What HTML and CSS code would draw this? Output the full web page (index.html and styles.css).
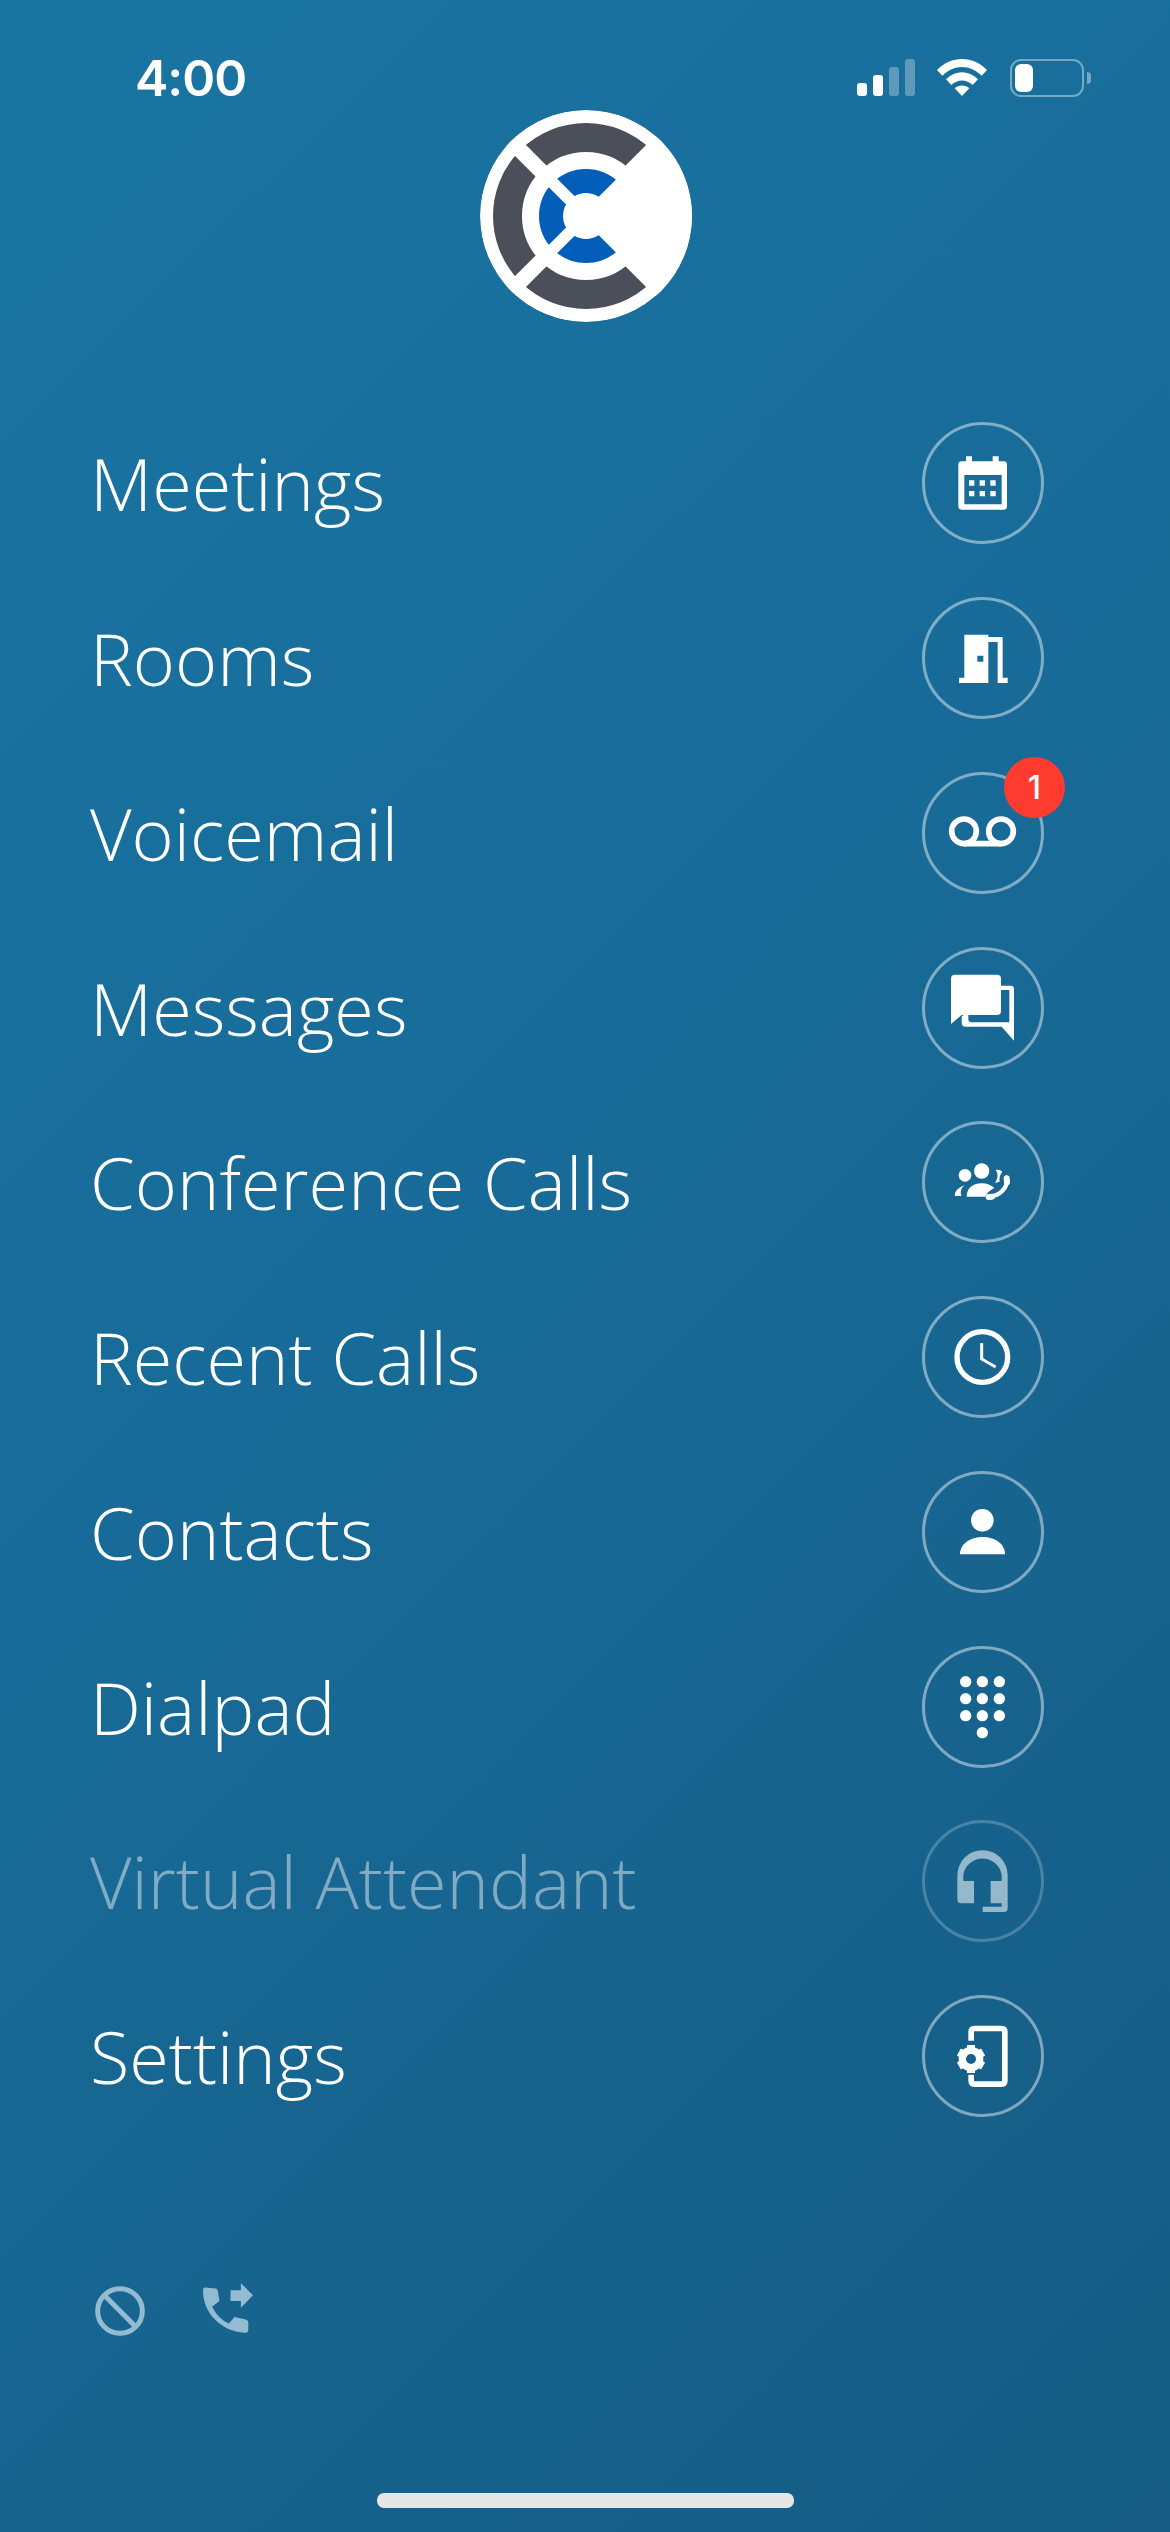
FILE: index.html
```html
<!DOCTYPE html>
<html lang="en">
<head>
<meta charset="utf-8">
<title>Menu</title>
<link rel="stylesheet" href="styles.css">
</head>
<body>
<div class="screen">
  <header class="status">
    <span class="time">4:00</span>
    <div class="status-icons">
      <div class="signal"><i class="bar b1"></i><i class="bar b2"></i><i class="bar b3 dim"></i><i class="bar b4 dim"></i></div>
      <svg class="wifi" viewBox="0 0 150 111"><path d="M0 33C42 -11 108 -11 150 33L134 50C100 15 50 15 16 50Z"/><path d="M27 61C55 33 95 33 123 61L107 78C88 60 62 60 43 78Z"/><path d="M53 88C66 77 84 77 97 88L75 111Z"/></svg>
      <div class="battery"><div class="battery-body"><div class="battery-fill"></div></div><div class="battery-nub"></div></div>
    </div>
  </header>

  <div class="logo-wrap">
    <svg class="logo" viewBox="-106 -106 212 212">
      <defs><clipPath id="disc"><circle r="106"/></clipPath></defs>
      <g clip-path="url(#disc)">
        <circle r="106" fill="#fff"/>
        <circle r="78.5" class="ring-gray"/>
        <path class="cut wide" d="M-100 -100L100 100M-100 100L100 -100"/>
        <path class="wedge" d="M-9.5 0L120 -129.5V129.5Z"/>
        <circle r="35" class="ring-blue"/>
        <path class="cut narrow" d="M-50 -50L0 0M-50 50L0 0"/>
        <path class="wedge" d="M-6.5 0L60 -66.5V66.5Z"/>
        <circle r="22.5" fill="#fff"/>
      </g>
    </svg>
  </div>

  <nav class="menu">
    <a class="row"><span class="label">Meetings</span><span class="disc">
      <svg viewBox="-183 -183 366 366"><path fill-rule="evenodd" d="M-51 -80H-33V-65H29V-80H47V-65H62Q72 -65 72 -55V70Q72 80 62 80H-64Q-74 80 -74 70V-55Q-74 -65 -64 -65H-51ZM-56 -24V64H56V-24ZM-42 -8H-26V8H-42ZM-10 -8H6V8H-10ZM22 -8H38V8H22ZM-42 24H-26V40H-42ZM-10 24H6V40H-10ZM22 24H38V40H22Z"/></svg>
    </span></a>
    <a class="row"><span class="label">Rooms</span><span class="disc">
      <svg viewBox="-183 -183 366 366"><path fill-rule="evenodd" d="M-56 -70H16V-63H59V59H74V75H44V-48H16V75H-72V59H-56ZM-17 -7V11H1V-7Z"/></svg>
    </span></a>
    <a class="row"><span class="label">Voicemail</span><span class="disc">
      <svg viewBox="-183 -183 366 366"><circle cx="-57" cy="-5" r="37" class="line" stroke-width="17"/><circle cx="54" cy="-5" r="37" class="line" stroke-width="17"/><path class="line" stroke-width="17" d="M-57 32H54"/></svg>
      <span class="badge">1</span>
    </span></a>
    <a class="row"><span class="label">Messages</span><span class="disc">
      <svg viewBox="-183 -183 366 366"><path d="M-84 -100H42Q54 -100 54 -88V9Q54 21 42 21H-64L-96 48V-88Q-96 -100 -84 -100Z"/><path d="M54 -67H83Q93 -67 93 -57V98L56 56H-52Q-64 56 -64 44V26L-58 21H-44V33Q-44 43 -34 43H79V-54H54Z"/></svg>
    </span></a>
    <a class="row"><span class="label">Conference Calls</span><span class="disc">
      <svg viewBox="-183 -183 366 366"><circle cx="-4" cy="-33" r="23"/><circle cx="-54" cy="-20" r="19"/><path d="M-49 44Q-48 6 -4 4Q20 4 34 18Q14 28 6 44Z"/><path d="M-85 42Q-84 20 -56 10Q-72 25 -65 42Z"/><path d="M38 -36C50 -38 56 -34 58 -30C50 -22 48 -10 50 -2C44 2 40 3 36 2C46 -10 46 -26 38 -36Z"/><path class="line" stroke-width="13" d="M72 -12C74 20 50 42 18 44"/><path class="line round" stroke-width="18" d="M71 -11L72 1M17 45L27 44"/></svg>
    </span></a>
    <a class="row"><span class="label">Recent Calls</span><span class="disc">
      <svg viewBox="-183 -183 366 366"><circle cx="-2" r="76" class="line" stroke-width="16"/><path class="line" stroke-width="9" d="M-4 -42V6L38 30"/></svg>
    </span></a>
    <a class="row"><span class="label">Contacts</span><span class="disc">
      <svg viewBox="-183 -183 366 366"><circle cx="-2" cy="-35" r="34"/><path d="M-69 67C-69 30 -30 15 -1 15S66 30 66 67Z"/></svg>
    </span></a>
    <a class="row"><span class="label">Dialpad</span><span class="disc">
      <svg viewBox="-183 -183 366 366"><circle cx="-52" cy="-76" r="17"/><circle cx="-2" cy="-76" r="17"/><circle cx="49" cy="-76" r="17"/><circle cx="-52" cy="-25" r="17"/><circle cx="-2" cy="-25" r="17"/><circle cx="49" cy="-25" r="17"/><circle cx="-52" cy="26" r="17"/><circle cx="-2" cy="26" r="17"/><circle cx="49" cy="26" r="17"/><circle cx="-2" cy="77" r="17"/></svg>
    </span></a>
    <a class="row disabled"><span class="label">Virtual Attendant</span><span class="disc">
      <svg viewBox="-183 -183 366 366"><path d="M-77 -17A75.5 75.5 0 0 1 74 -17V82Q74 93 63 93H-1V77H56V67H23V0H56V-17A58 58 0 0 0 -59 -17V0H-27V67H-65Q-77 67 -77 55Z"/></svg>
    </span></a>
    <a class="row"><span class="label">Settings</span><span class="disc">
      <svg viewBox="-183 -183 366 366"><path class="line" stroke-width="17" d="M-35.5 -46V-72.5Q-35.5 -82.5 -25.5 -82.5H55.5Q65.5 -82.5 65.5 -72.5V74.5Q65.5 84.5 55.5 84.5H-25.5Q-35.5 84.5 -35.5 74.5V56"/><g transform="translate(-36 9)"><circle r="26" class="line" stroke-width="22"/><path d="M-12 -42H12V-30H-12Z"/><path d="M-12 -42H12V-30H-12Z" transform="rotate(60)"/><path d="M-12 -42H12V-30H-12Z" transform="rotate(120)"/><path d="M-12 -42H12V-30H-12Z" transform="rotate(180)"/><path d="M-12 -42H12V-30H-12Z" transform="rotate(240)"/><path d="M-12 -42H12V-30H-12Z" transform="rotate(300)"/></g></svg>
    </span></a>
  </nav>

  <footer class="foot">
    <svg class="foot-block" viewBox="0 0 150 150"><circle cx="75" cy="75" r="67" class="foot-line"/><path class="foot-line" d="M28 28L122 122"/></svg>
    <svg class="foot-forward" viewBox="428 72 149 148"><path d="M435 85L465 88Q470 88 472 95L477 125L455 142Q475 180 505 192L522 173L556 180Q563 182 563 190V210Q563 220 553 220C480 215 428 160 428 93Q428 85 435 85Z"/><path d="M510 93H541V72L577 108L541 145V125H510Z"/></svg>
  </footer>

  <div class="home"></div>
</div>
</body>
</html>
```
FILE: styles.css
```css
* { box-sizing: border-box; }
html, body { margin: 0; padding: 0; }
body { width: 1170px; height: 2532px; overflow: hidden; font-family: "Open Sans", "Noto Sans", sans-serif; color: #fff; }
.screen {
  width: 1170px; height: 2532px;
  display: flex; flex-direction: column;
  background: linear-gradient(135deg, #1a75a3 0%, #186b98 45%, #155b83 100%);
}
.status { height: 110px; padding: 58px 79px 0 135px; display: flex; justify-content: space-between; align-items: flex-start; flex: none; }
.time { font-family: Inter, "Liberation Sans", sans-serif; font-weight: 600; font-size: 50px; line-height: 40px; letter-spacing: -1px; }
.status-icons { display: flex; align-items: flex-start; gap: 22px; margin-top: 1px; }
.signal { display: flex; align-items: flex-end; gap: 6px; height: 37px; }
.bar { display: block; width: 10px; background: #fff; border-radius: 3px; }
.bar.dim { background: rgba(255,255,255,.3); }
.b1 { height: 13px; } .b2 { height: 21px; } .b3 { height: 29px; } .b4 { height: 37px; }
.wifi { width: 50px; height: 37px; fill: #fff; display: block; }
.battery { display: flex; align-items: center; gap: 3px; margin-left: 1px; }
.battery-body { width: 74px; height: 38px; border: 2.5px solid rgba(255,255,255,.4); border-radius: 11px; padding: 3px; }
.battery-fill { width: 18px; height: 100%; background: #fff; border-radius: 6px; }
.battery-nub { width: 4px; height: 12px; background: rgba(255,255,255,.4); border-radius: 0 4px 4px 0; }
.logo-wrap { display: flex; justify-content: center; flex: none; }
.logo { width: 212px; height: 212px; display: block; margin-left: 1px; }
.ring-gray { fill: none; stroke: #4a4f59; stroke-width: 29; }
.ring-blue { fill: none; stroke: #025eb8; stroke-width: 24; }
.cut { stroke: #fff; fill: none; }
.wide { stroke-width: 15.4; }
.narrow { stroke-width: 11.8; }
.wedge { fill: #fff; }
.menu { display: flex; flex-direction: column; margin-top: 74px; padding: 0 126px 0 90px; flex: none; }
.row { display: flex; align-items: center; justify-content: space-between; height: 174.75px; }
.label { font-weight: 300; font-size: 72px; line-height: 1; }
.disc { position: relative; width: 122px; height: 122px; border: 3px solid rgba(255,255,255,.45); border-radius: 50%; flex: none; display: flex; align-items: center; justify-content: center; }
.disc svg { width: 122px; height: 122px; flex: none; fill: #fff; overflow: visible; }
.line { fill: none; stroke: #fff; }
.round { stroke-linecap: round; }
.badge { position: absolute; top: -18px; right: -24px; width: 61px; height: 61px; border-radius: 50%; background: #ff3b30; font-family: Inter, sans-serif; font-weight: 500; font-size: 32px; display: flex; align-items: center; justify-content: center; }
.disabled .label { opacity: .45; }
.disabled .disc { border-color: rgba(255,255,255,.22); }
.disabled .disc svg { fill: rgba(255,255,255,.55); }
.foot { display: flex; align-items: flex-start; margin-top: 139px; padding-left: 95px; gap: 58px; flex: none; }
.foot-block { width: 50px; height: 50px; margin-top: 3px; display: block; }
.foot-line { fill: none; stroke: #93bcd3; stroke-width: 15; }
.foot-forward { width: 50px; height: 50px; display: block; fill: #93bcd3; }
.home { width: 417px; height: 15px; background: #e6e6e6; border-radius: 7px; margin: 157px auto 0; flex: none; }
```
